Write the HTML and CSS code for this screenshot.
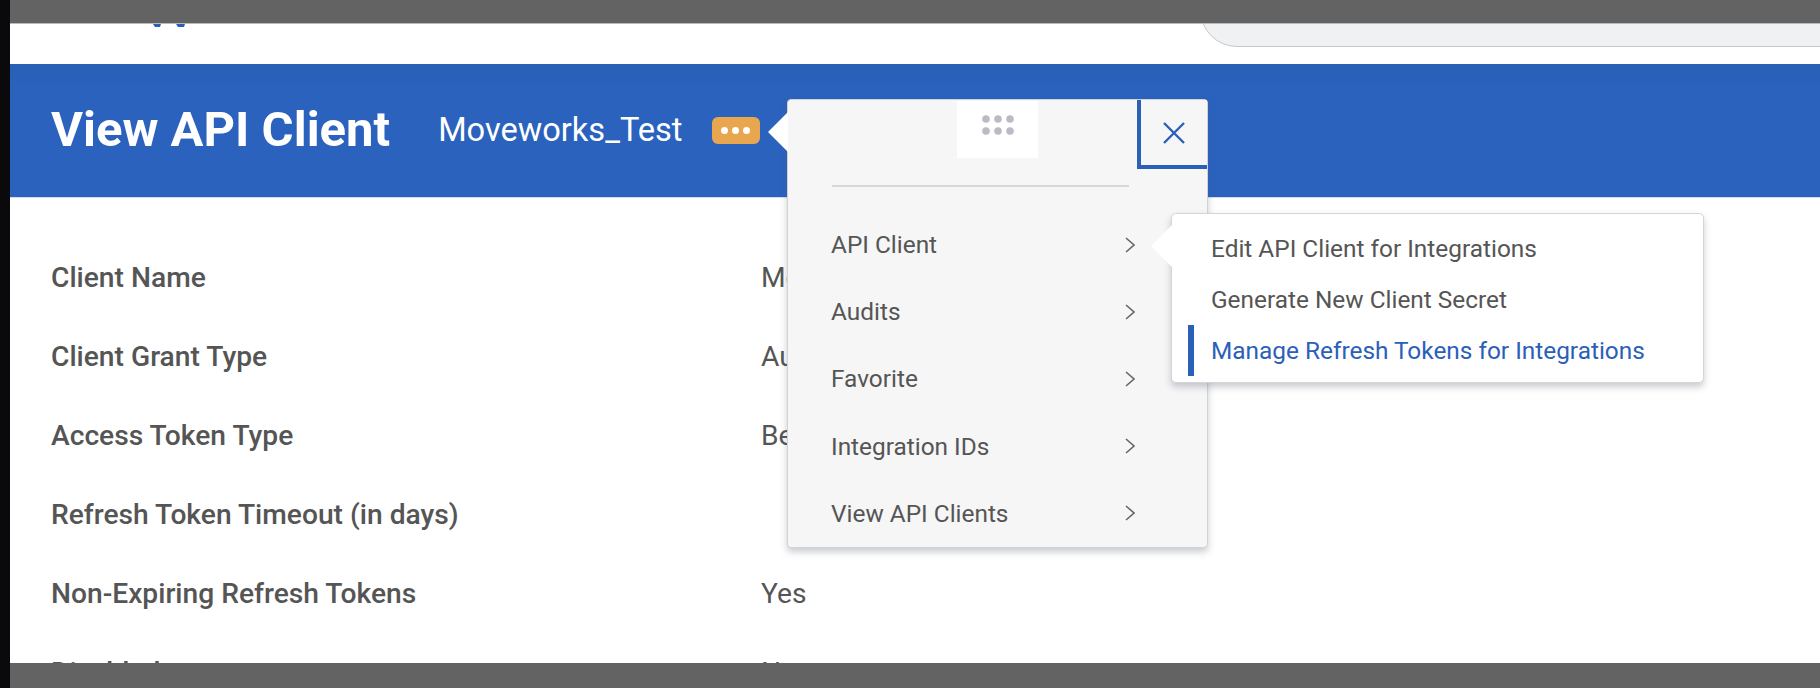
FILE: index.html
```html
<!DOCTYPE html>
<html lang="en">
<head>
  <meta charset="UTF-8">
  <title>View API Client</title>
  <link rel="stylesheet" href="styles.css">
</head>
<body>
  <div class="topbar"></div>
  <div class="app">
    <div class="nav">
      <svg class="logo" width="32" height="4" viewBox="0 0 32 4"><path d="M0 0h8l-1 3H2zM23 0h9l-1 3h-6z" fill="#2a60b8"/></svg>
      <div class="search"></div>
    </div>
    <div class="band">
      <h1 class="title">View API Client</h1>
      <span class="subject">Moveworks_Test</span>
      <span class="badge"><i></i><i></i><i></i></span>
    </div>
    <div class="fields">
      <div class="field"><span class="name">Client Name</span><span class="covered">Moveworks_Test</span></div>
      <div class="field"><span class="name">Client Grant Type</span><span class="covered">Authorization Code Grant</span></div>
      <div class="field"><span class="name">Access Token Type</span><span class="covered">Bearer</span></div>
      <div class="field"><span class="name">Refresh Token Timeout (in days)</span><span></span></div>
      <div class="field"><span class="name">Non-Expiring Refresh Tokens</span><span>Yes</span></div>
      <div class="field"><span class="name">Disabled</span><span>No</span></div>
    </div>
  </div>

  <div class="menu">
    <div class="menu-arrow"></div>
    <div class="menu-top">
      <div class="grip"><svg width="32" height="20" viewBox="0 0 32 20" fill="#b9bcc4"><circle cx="4" cy="4" r="3.8"/><circle cx="16" cy="4" r="3.8"/><circle cx="28" cy="4" r="3.8"/><circle cx="4" cy="16" r="3.8"/><circle cx="16" cy="16" r="3.8"/><circle cx="28" cy="16" r="3.8"/></svg></div>
      <button class="close"><svg width="22" height="22" viewBox="0 0 22 22"><path d="M1 1l20 20M21 1L1 21" stroke="#2a60b8" stroke-width="2.4" fill="none"/></svg></button>
    </div>
    <div class="menu-rule"></div>
    <ul class="menu-list">
      <li>API Client<svg class="chev" width="10" height="16" viewBox="0 0 10 16"><path d="M1 1l8 7-8 7" stroke="#666" stroke-width="1.6" fill="none"/></svg></li>
      <li>Audits<svg class="chev" width="10" height="16" viewBox="0 0 10 16"><path d="M1 1l8 7-8 7" stroke="#666" stroke-width="1.6" fill="none"/></svg></li>
      <li>Favorite<svg class="chev" width="10" height="16" viewBox="0 0 10 16"><path d="M1 1l8 7-8 7" stroke="#666" stroke-width="1.6" fill="none"/></svg></li>
      <li>Integration IDs<svg class="chev" width="10" height="16" viewBox="0 0 10 16"><path d="M1 1l8 7-8 7" stroke="#666" stroke-width="1.6" fill="none"/></svg></li>
      <li>View API Clients<svg class="chev" width="10" height="16" viewBox="0 0 10 16"><path d="M1 1l8 7-8 7" stroke="#666" stroke-width="1.6" fill="none"/></svg></li>
    </ul>
  </div>

  <div class="submenu">
    <div class="submenu-arrow"></div>
    <div class="sub-item">Edit API Client for Integrations</div>
    <div class="sub-item">Generate New Client Secret</div>
    <div class="sub-item active">Manage Refresh Tokens for Integrations</div>
  </div>

  <div class="bottombar"></div>
</body>
</html>
```

FILE: styles.css
```css
html, body {
  height: 100%;
  margin: 0;
  padding: 0;
}

body {
  position: relative;
  height: 688px;
  overflow: hidden;
  background: #fff;
  font-family: Roboto, "Liberation Sans", sans-serif;
  color: #555;
  border-left: 10px solid #0a0a0c;
  box-sizing: border-box;
}

.topbar {
  height: 24px;
  background: #636363;
  border-bottom: 1px solid #bbb;
  box-sizing: border-box;
}

.nav {
  position: relative;
  height: 40px;
  overflow: hidden;
}

.logo {
  display: block;
  margin-left: 143px;
}

.search {
  position: absolute;
  left: 1190px;
  top: -51px;
  width: 800px;
  height: 74px;
  background: #f0f1f2;
  border: 1px solid #c8c8cc;
  border-radius: 37px;
  box-sizing: border-box;
}

.band {
  display: flex;
  align-items: center;
  height: 134px;
  padding: 0 0 2px 41px;
  background: linear-gradient(#2860b4, #2a62be 20%);
  color: #fff;
  box-sizing: border-box;
  border-bottom: 1px solid #d5dbe6;
}

.title {
  margin: 0 48px 0 0;
  font-size: 49px;
  font-weight: 700;
  white-space: nowrap;
}

.subject {
  font-size: 32.6px;
  margin-right: 29px;
}

.badge {
  display: flex;
  align-items: center;
  justify-content: center;
  gap: 4px;
  width: 48px;
  height: 27px;
  margin-top: 2px;
  background: #e8a64e;
  border-radius: 6px;
}

.badge i {
  width: 7px;
  height: 7px;
  border-radius: 50%;
  background: #fff;
}

.fields {
  padding: 40px 0 0 41px;
}

.field {
  display: grid;
  grid-template-columns: 710px 1fr;
  height: 79px;
  font-size: 28.2px;
  line-height: 79px;
  white-space: nowrap;
}

.name {
  font-weight: 500;
}

/* these values run on under the related actions menu */
.covered {
  width: 26px;
  overflow: hidden;
}

.menu {
  position: absolute;
  left: 777px;
  top: 99px;
  width: 421px;
  height: 449px;
  background: #f6f6f7;
  border: 1px solid #cfd2d8;
  border-radius: 4px;
  box-sizing: border-box;
  box-shadow: 0 4px 7px rgba(90, 95, 110, 0.32);
}

.menu-arrow {
  position: absolute;
  left: -20px;
  top: 12px;
  width: 0;
  height: 0;
  border-top: 20px solid transparent;
  border-bottom: 20px solid transparent;
  border-right: 20px solid #fff;
}

.menu-top {
  position: relative;
  height: 70px;
}

.grip {
  position: absolute;
  left: 169px;
  top: 1px;
  width: 81px;
  height: 57px;
  background: #fff;
  display: flex;
  justify-content: center;
  padding-top: 14px;
  box-sizing: border-box;
}

.close {
  position: absolute;
  left: 349px;
  top: 0;
  width: 70px;
  height: 69px;
  padding: 0;
  background: #f6f6f7;
  border: none;
  border-left: 4px solid #2a60b8;
  border-bottom: 4px solid #2a60b8;
  box-sizing: border-box;
  display: flex;
  align-items: center;
  justify-content: center;
}

.menu-rule {
  height: 2px;
  background: #d6d8dc;
  margin: 15px 78px 0 44px;
}

.menu-list {
  list-style: none;
  margin: 24px 0 0;
  padding: 0 72px 0 43px;
}

.menu-list li {
  display: flex;
  align-items: center;
  justify-content: space-between;
  height: 67.2px;
  font-size: 24.4px;
}

.submenu {
  position: absolute;
  left: 1161px;
  top: 213px;
  width: 533px;
  height: 170px;
  padding: 9px 0 0 39px;
  background: #fff;
  border: 1px solid #d3d5da;
  border-radius: 5px;
  box-sizing: border-box;
  box-shadow: 0 4px 7px rgba(90, 95, 110, 0.32);
}

.submenu-arrow {
  position: absolute;
  left: -21px;
  top: 11px;
  width: 0;
  height: 0;
  border-top: 21px solid transparent;
  border-bottom: 21px solid transparent;
  border-right: 21px solid #fff;
}

.sub-item {
  position: relative;
  height: 51px;
  line-height: 51px;
  font-size: 24.4px;
  white-space: nowrap;
}

.sub-item.active {
  color: #2a60b8;
}

.sub-item.active::before {
  content: "";
  position: absolute;
  left: -23px;
  top: 0;
  width: 6px;
  height: 51px;
  background: #2a60b8;
}

.bottombar {
  position: absolute;
  left: 0;
  right: 0;
  top: 663px;
  height: 25px;
  background: #636363;
}
```
